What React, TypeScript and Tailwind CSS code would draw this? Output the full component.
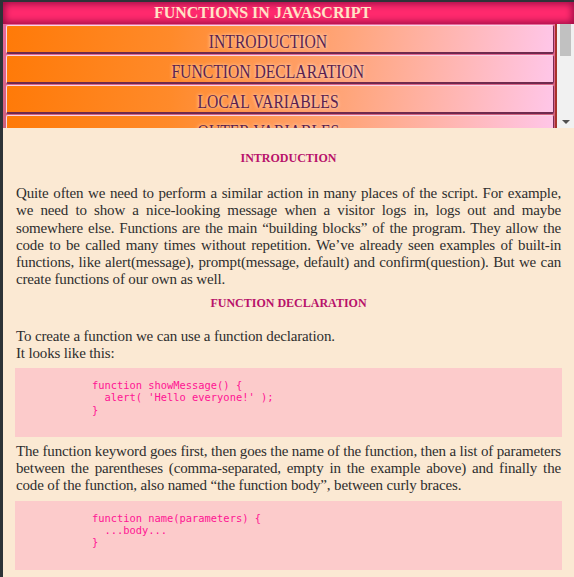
import React from "react";

// Table of contents entries for the nav strip
const sections = [
  "INTRODUCTION",
  "FUNCTION DECLARATION",
  "LOCAL VARIABLES",
  "OUTER VARIABLES",
  "PARAMETERS",
  "DEFAULT VALUES",
  "RETURNING A VALUE",
  "NAMING A FUNCTION",
  "FUNCTIONS == COMMENTS",
  "SUMMARY",
];

const serif = "font-['Liberation_Serif','Times_New_Roman',serif]";

const Heading = ({ children, className = "" }: { children: React.ReactNode; className?: string }) => (
  <h2 className={`text-center text-[12px] leading-[14px] font-bold text-[#b8126a] ${className}`}>{children}</h2>
);

const Code = ({ lines, className = "" }: { lines: string[]; className?: string }) => (
  <pre
    className={`bg-[#fccbcb] pl-[77px] pt-[11px] pb-[21px] font-['DejaVu_Sans_Mono',monospace] text-[10.4px] leading-[12.3px] text-[#ff1493] ${className}`}
  >
    {lines.join("\n")}
  </pre>
);

const App = () => {
  return (
    <div className={`flex h-[577px] flex-col overflow-hidden bg-[#2d3337] pl-[3px] pt-[2px] ${serif}`}>
      {/* page title */}
      <header className="h-[22px] shrink-0 bg-[#ff2a6e] pr-[52px] text-center text-[16px] leading-[22px] font-bold text-[#ffe3c6] shadow-[inset_0_0_7px_2px_#9c0d45]">
        FUNCTIONS IN JAVASCRIPT
      </header>

      {/* section buttons + scrollbar */}
      <nav className="flex h-[104px] shrink-0">
        <div className="flex-1 overflow-hidden border-r-2 border-[#a8322a] bg-gradient-to-b from-[#e8699b] to-[#d0607a] pl-[3px] pr-[1px] pt-[1px]">
          <div className="flex flex-col gap-[1px]">
            {sections.map((s) => (
              <div
                key={s}
                className="h-[29px] shrink-0 rounded-[2px] border border-t-[#f7d7e6] border-l-[#f7d7e6] border-r-[#7a2d55] border-b-2 border-b-[#6e2a4e] bg-[linear-gradient(97deg,#ff7a08_0%,#ff8a2a_30%,#ffa57a_62%,#ffc6e8_100%)] pr-[24px] pt-[6px] text-center text-[18px] leading-[20px] text-[#5b1f4f] [text-shadow:0_0_4px_#fff3e6]"
              >
                <span className="inline-block scale-x-[0.87]">{s}</span>
              </div>
            ))}
          </div>
        </div>
        <div className="flex w-[17px] flex-col items-center justify-between bg-[#f1f1f1] pb-[4px]">
          <div className="h-[32px] w-[11px] bg-[#c1c1c1]" />
          <div className="h-0 w-0 border-x-[4px] border-t-[4px] border-x-transparent border-t-[#505050]" />
        </div>
      </nav>

      {/* article */}
      <main className="flex-1 overflow-hidden bg-[#fbe9d3] px-[13px] pt-[23px] text-[15px] leading-[17.25px] tracking-[-0.15px] text-[#2e2e2e]">
        <Heading className="mb-[20px] tracking-normal">INTRODUCTION</Heading>
        <p className="text-justify">
          Quite often we need to perform a similar action in many places of the script. For example, we need to show a
          nice-looking message when a visitor logs in, logs out and maybe somewhere else. Functions are the main
          “building blocks” of the program. They allow the code to be called many times without repetition. We’ve
          already seen examples of built-in functions, like alert(message), prompt(message, default) and
          confirm(question). But we can create functions of our own as well.
        </p>

        <Heading className="mt-[7px] mb-[18px] tracking-normal">FUNCTION DECLARATION</Heading>
        <p>
          To create a function we can use a function declaration.
          <br />
          It looks like this:
        </p>
        <Code className="-mx-[1px] mt-[6px] tracking-normal" lines={["function showMessage() {", "  alert( 'Hello everyone!' );", "}"]} />
        <p className="mt-[6px] text-justify">
          The function keyword goes first, then goes the name of the function, then a list of parameters between the
          parentheses (comma-separated, empty in the example above) and finally the code of the function, also named
          “the function body”, between curly braces.
        </p>
        <Code className="-mx-[1px] mt-[6px] tracking-normal" lines={["function name(parameters) {", "  ...body...", "}"]} />
        <p className="mt-[6px] text-justify">Our new function can be called by its name: showMessage().</p>
      </main>
    </div>
  );
};

export default App;
